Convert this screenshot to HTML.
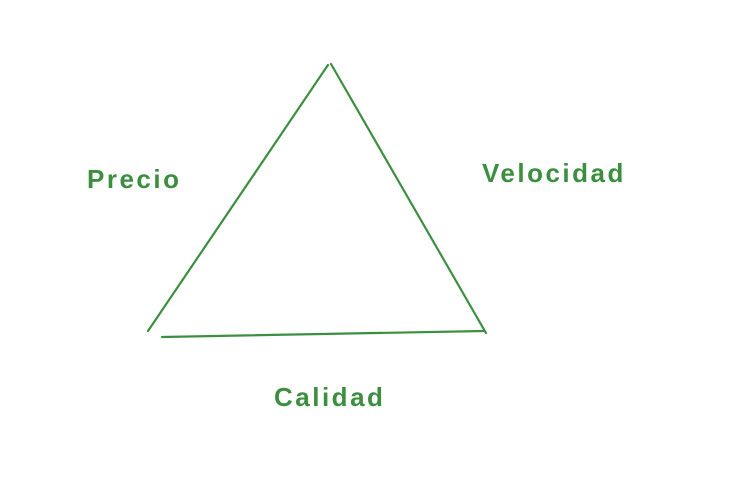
<!DOCTYPE html>
<html><head><style>
html,body{margin:0;padding:0;background:#fff;width:732px;height:482px;overflow:hidden}
.t{position:absolute;font-family:"Liberation Sans",sans-serif;font-weight:bold;color:#3d8f40;font-size:26px;letter-spacing:2.5px;line-height:1}
</style></head><body>
<svg width="732" height="482" style="position:absolute;left:0;top:0">
<g stroke="#3d8f40" stroke-width="2.2" fill="none" stroke-linecap="round">
<path d="M328 65 L148 331"/>
<path d="M331 64 L486 333"/>
<path d="M162 337 L484 331"/>
</g></svg>
<div class="t" style="left:87px;top:166px">Precio</div>
<div class="t" style="left:482px;top:160px">Velocidad</div>
<div class="t" style="left:274px;top:384px">Calidad</div>
</body></html>
